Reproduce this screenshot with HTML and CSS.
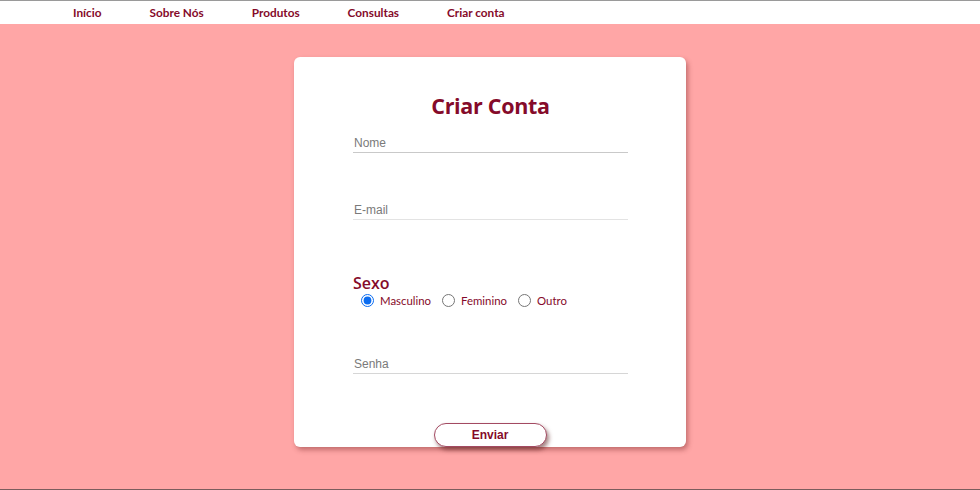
FILE: index.html
```html
<!DOCTYPE html>
<html lang="pt">
<head>
<meta charset="utf-8">
<title>Criar Conta</title>
<link rel="stylesheet" href="styles.css">
</head>
<body>
<nav class="topnav">
  <a href="#">Início</a>
  <a href="#">Sobre Nós</a>
  <a href="#">Produtos</a>
  <a href="#">Consultas</a>
  <a href="#">Criar conta</a>
</nav>
<main class="page">
  <form class="card">
    <h1 class="title">Criar Conta</h1>
    <input class="field field-nome" type="text" placeholder="Nome">
    <input class="field field-email" type="email" placeholder="E-mail">
    <div class="sexo">
      <span class="sexo-label">Sexo</span>
      <div class="radios">
        <label class="radio"><input type="radio" name="sexo" checked> Masculino</label>
        <label class="radio"><input type="radio" name="sexo"> Feminino</label>
        <label class="radio"><input type="radio" name="sexo"> Outro</label>
      </div>
    </div>
    <input class="field field-senha" type="password" placeholder="Senha">
    <div class="actions"><button type="submit" class="btn">Enviar</button></div>
  </form>
</main>
<div class="bottom-line"></div>
</body>
</html>
```
FILE: styles.css
```css
* { box-sizing: border-box; }
html, body { margin: 0; padding: 0; height: 100%; }
body {
  background: #ffa6a6;
  font-family: "Open Sans", "Noto Sans", sans-serif;
  display: flex;
  flex-direction: column;
  overflow: hidden;
}
.topnav {
  background: #fff;
  border-top: 1px solid #9a9a9a;
  height: 24px;
  display: flex;
  align-items: center;
  gap: 48px;
  padding-left: 73px;
}
.topnav a {
  color: #850a2a;
  font-family: Lato, "Open Sans", sans-serif;
  font-weight: 700;
  font-size: 11.8px;
  text-decoration: none;
}
.page {
  flex: 1;
  display: flex;
  justify-content: center;
  align-items: flex-start;
  padding-top: 33px;
}
.card {
  width: 392px;
  height: 390px;
  background: #fff;
  border-radius: 6px;
  box-shadow: 2px 3px 5px rgba(120, 40, 40, 0.45);
  padding: 0 58px 0 59px;
  display: flex;
  flex-direction: column;
}
.title {
  margin: 34px 0 0;
  text-align: center;
  color: #850a2a;
  font-size: 21.5px;
  line-height: 30px;
  font-weight: 700;
  letter-spacing: -0.3px;
}
.field {
  display: block;
  width: 275px;
  height: 20px;
  border: none;
  border-bottom: 1px solid #c9c9c9;
  padding: 0 1px;
  font-family: "Liberation Sans", Arial, sans-serif;
  font-size: 12px;
  outline: none;
  background: transparent;
}
.field::placeholder { color: #7a7a7a; }
.field-nome { margin-top: 12px; }
.field-email { margin-top: 47px; border-bottom-color: #e3e3e3; }
.sexo { margin-top: 53px; display: flex; flex-direction: column; }
.sexo-label {
  color: #850a2a;
  font-size: 16px;
  line-height: 20px;
  font-weight: 600;
}
.radios { display: flex; gap: 11px; padding-left: 8px; margin-top: 1px; }
.radio {
  color: #850a2a;
  font-family: Lato, "Open Sans", sans-serif;
  font-size: 11.4px;
  display: flex;
  align-items: center;
  gap: 3px;
}
.radio input { margin: 0 3px 0 0; width: 13px; height: 13px; accent-color: #0b6cf0; }
.field-senha { margin-top: 47px; border-bottom-color: #d6d6d6; }
.actions { display: flex; justify-content: center; margin-top: 49px; padding-right: 1px; }
.btn {
  width: 113px;
  height: 24px;
  border-radius: 12px;
  background: #fff;
  border: 1px solid #a34a62;
  color: #850a2a;
  font-family: "Liberation Sans", Arial, sans-serif;
  font-weight: 700;
  font-size: 12px;
  box-shadow: 2px 3px 4px rgba(90, 30, 30, 0.55);
  cursor: pointer;
}
.bottom-line { height: 1px; background: #7b5c5c; }
```
